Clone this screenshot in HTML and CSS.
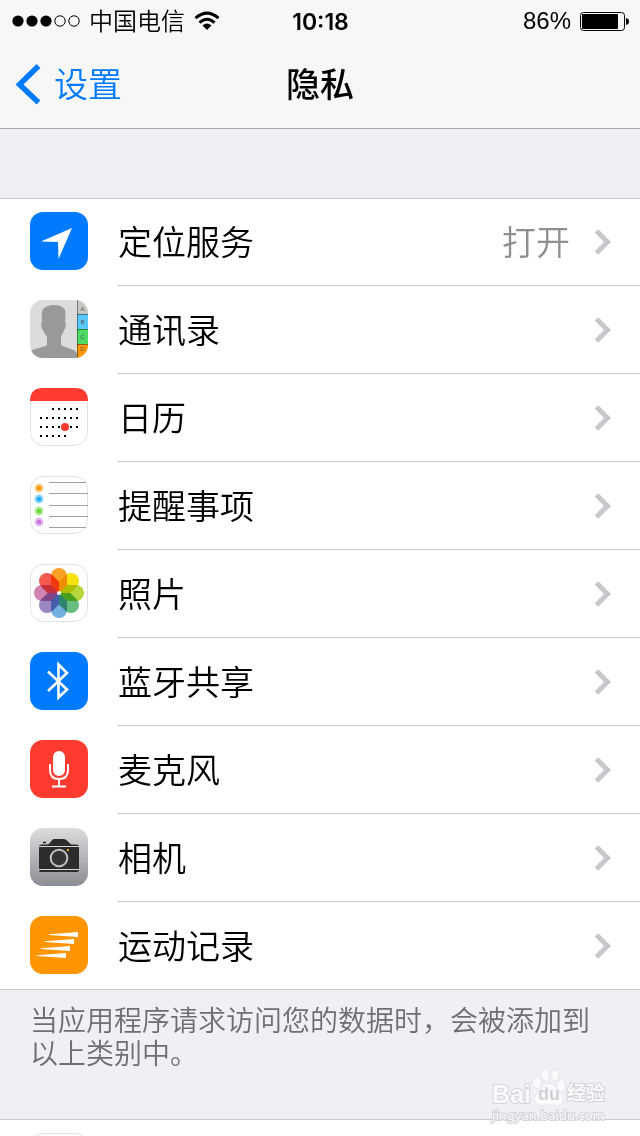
FILE: index.html
```html
<!DOCTYPE html>
<html lang="zh-CN">
<head>
<meta charset="utf-8">
<meta name="viewport" content="width=device-width, initial-scale=1">
<title>隐私</title>
<link rel="stylesheet" href="styles.css">
</head>
<body>
<div class="screen">
  <header class="top">
    <div class="status">
      <div class="status-left">
        <svg class="signal" width="68" height="12" viewBox="0 0 68 12" aria-hidden="true">
          <circle cx="6" cy="6" r="5.6"/><circle cx="20" cy="6" r="5.6"/><circle cx="34" cy="6" r="5.6"/>
          <g fill="none" stroke="#000"><circle cx="48" cy="6" r="5.2"/><circle cx="62" cy="6" r="5.2"/></g>
        </svg>
        <span class="carrier">中国电信</span>
        <svg class="wifi" width="26" height="20" viewBox="0 0 26 20" aria-hidden="true">
          <g fill="none" stroke="#000" stroke-width="3"><path d="M1.500 7.200Q13-3 24.500 7.200"/><path d="M5.500 11.700Q13 4.900 20.500 11.700"/></g>
          <path d="M8.500 14.600Q13 10.600 17.500 14.600L13 19z"/>
        </svg>
      </div>
      <time class="clock">10:18</time>
      <div class="status-right">
        <span>86%</span>
        <svg width="50" height="20" viewBox="0 0 50 20" aria-hidden="true">
          <rect x="1.500" y="1.500" width="44" height="18" rx="3" fill="none" stroke="#000"/>
          <rect x="3" y="3" width="36" height="15" rx="1"/>
          <path d="M47 7q3 .5 3 3.500t-3 3.500z"/>
        </svg>
      </div>
    </div>
    <nav class="nav">
      <a class="back" href="#settings">
        <svg width="26" height="42" viewBox="0 0 26 42" aria-hidden="true"><path d="M23.500 3 4.500 21.500 23.500 39.500" fill="none" stroke="#007aff" stroke-width="5.500"/></svg>
        <span class="nav-text">设置</span>
      </a>
      <h1 class="title nav-text">隐私</h1>
    </nav>
  </header>

  <main class="content">
    <ul class="group">
      <li><a class="row" href="#location">
        <svg class="icon" viewBox="0 0 58 58" aria-hidden="true"><rect width="58" height="58" rx="13" fill="#007aff"/><path d="M42 16 11 29.500l17 .5.500 17z" fill="#fff"/></svg>
        <span class="body"><span class="label">定位服务</span><span class="value">打开</span><svg class="chevron" viewBox="0 0 18 26"><path d="m2.500 2 11 11-11 11"/></svg></span>
      </a></li>
      <li><a class="row" href="#contacts">
        <svg class="icon" viewBox="0 0 58 58" aria-hidden="true">
          <clipPath id="tile"><rect width="58" height="58" rx="13"/></clipPath>
          <g clip-path="url(#tile)">
            <rect width="58" height="58" fill="#dcdcdc"/>
            <path d="M0 58v-5q1-3 5-4 9-2 12-4V36q-3-2-4-6-2-2-2-6l1-2q-1-10 1-13 4-4 11-4 8 0 11 5 1 2 0 12l1 2q0 4-2 6-1 4-3 6v9q3 2 10 4 5 1 6 5v4z" fill="#999"/>
            <path d="M47 0h11v14H47z" fill="#c8c8c3"/><path d="M47 14h11v15H47z" fill="#5ac8fa"/><path d="M47 29h11v15H47z" fill="#4cd964"/><path d="M47 44h11v14H47z" fill="#ff9500"/>
            <path d="M47.500 0v58M47 14.500h11M47 29.500h11M47 44.500h11" fill="none" stroke="#000" stroke-opacity=".4"/>
            <g class="tabs"><text x="52.500" y="11">A</text><text x="52.500" y="24">B</text><text x="52.500" y="39">C</text><text x="52.500" y="51">D</text></g>
          </g>
        </svg>
        <span class="body"><span class="label">通讯录</span><svg class="chevron" viewBox="0 0 18 26"><path d="m2.500 2 11 11-11 11"/></svg></span>
      </a></li>
      <li><a class="row" href="#calendar">
        <svg class="icon" viewBox="0 0 58 58" aria-hidden="true">
          <rect x=".5" y=".5" width="57" height="57" rx="13" fill="#fff" stroke="#e2e2e2"/>
          <path d="M0 13Q0 0 13 0h32q13 0 13 13z" fill="#ff3b30"/>
          <path d="M22 21h27M10 30h39M10 39h39M10 48h27" fill="none" stroke="#000" stroke-width="2" stroke-dasharray="2 4"/>
          <circle cx="35" cy="39" r="4" fill="#ff3b30"/>
        </svg>
        <span class="body"><span class="label">日历</span><svg class="chevron" viewBox="0 0 18 26"><path d="m2.500 2 11 11-11 11"/></svg></span>
      </a></li>
      <li><a class="row" href="#reminders">
        <svg class="icon" viewBox="0 0 58 58" aria-hidden="true">
          <rect x=".5" y=".5" width="57" height="57" rx="13" fill="#fff" stroke="#e2e2e2"/>
          <path d="M19 6.500h37M19 17.500h39M19 29.500h39M19 40.500h39M19 51.500h37" fill="none" stroke="#a0a0a0"/>
          <g stroke-opacity=".6" stroke-width="1.500">
            <circle cx="9" cy="12" r="2.500" fill="#ff9500"/><circle cx="9" cy="12" r="3.500" fill="none" stroke="#ff9500"/>
            <circle cx="9" cy="23" r="2.500" fill="#1badf8"/><circle cx="9" cy="23" r="3.500" fill="none" stroke="#1badf8"/>
            <circle cx="9" cy="35" r="2.500" fill="#63da38"/><circle cx="9" cy="35" r="3.500" fill="none" stroke="#63da38"/>
            <circle cx="9" cy="46" r="2.500" fill="#cc73e1"/><circle cx="9" cy="46" r="3.500" fill="none" stroke="#cc73e1"/>
          </g>
        </svg>
        <span class="body"><span class="label">提醒事项</span><svg class="chevron" viewBox="0 0 18 26"><path d="m2.500 2 11 11-11 11"/></svg></span>
      </a></li>
      <li><a class="row" href="#photos">
        <svg class="icon" viewBox="0 0 58 58" aria-hidden="true">
          <rect x=".5" y=".5" width="57" height="57" rx="13" fill="#fff" stroke="#e2e2e2"/>
          <defs><path id="petal" d="M29 29 21 21V12a8 8 0 0 1 16 0V21z"/></defs>
          <g class="petals">
            <use href="#petal" fill="#fba026"/>
            <use href="#petal" transform="rotate(45 29 29)" fill="#f5e10b"/>
            <use href="#petal" transform="rotate(90 29 29)" fill="#b6d63c"/>
            <use href="#petal" transform="rotate(135 29 29)" fill="#67bd80"/>
            <use href="#petal" transform="rotate(180 29 29)" fill="#72b0e0"/>
            <use href="#petal" transform="rotate(225 29 29)" fill="#9b86c4"/>
            <use href="#petal" transform="rotate(270 29 29)" fill="#d184b2"/>
            <use href="#petal" transform="rotate(315 29 29)" fill="#f45a50"/>
          </g>
          <circle cx="29" cy="29" r="2" fill="#fff"/>
        </svg>
        <span class="body"><span class="label">照片</span><svg class="chevron" viewBox="0 0 18 26"><path d="m2.500 2 11 11-11 11"/></svg></span>
      </a></li>
      <li><a class="row" href="#bluetooth">
        <svg class="icon" viewBox="0 0 58 58" aria-hidden="true"><rect width="58" height="58" rx="13" fill="#007aff"/><path d="M18 19.500 37 37.500l-8.500 8V12.500l8.500 8.500L18 39" fill="none" stroke="#fff" stroke-width="2.600"/></svg>
        <span class="body"><span class="label">蓝牙共享</span><svg class="chevron" viewBox="0 0 18 26"><path d="m2.500 2 11 11-11 11"/></svg></span>
      </a></li>
      <li><a class="row" href="#microphone">
        <svg class="icon" viewBox="0 0 58 58" aria-hidden="true"><rect width="58" height="58" rx="13" fill="#ff3b30"/><rect x="23" y="11" width="12" height="25" rx="6" fill="#fff"/><path d="M20 24v6q0 9 9 9t9-9v-6M29 39v7M22 46.500h14" fill="none" stroke="#fff" stroke-width="2"/></svg>
        <span class="body"><span class="label">麦克风</span><svg class="chevron" viewBox="0 0 18 26"><path d="m2.500 2 11 11-11 11"/></svg></span>
      </a></li>
      <li><a class="row" href="#camera">
        <svg class="icon" viewBox="0 0 58 58" aria-hidden="true">
          <linearGradient id="steel" x2="0" y2="1"><stop stop-color="#dbddde"/><stop offset="1" stop-color="#8b8d94"/></linearGradient>
          <rect width="58" height="58" rx="13" fill="url(#steel)"/>
          <path d="M9 18.500q0-2 3-2h5q2 0 4-3t3-2.500h10q2 0 4 2.500t4 3h4q3 0 3 2V42q0 2-2 2H11q-2 0-2-2z" fill="#2c2c2c"/>
          <path d="M13 14.500h3" stroke="#222" stroke-width="1.500"/>
          <path d="M9 18.500h40M9 41.500h40" stroke="#d5d5d5"/>
          <circle cx="29" cy="30" r="8.300" fill="#343434" stroke="#bfc0c2" stroke-width="2"/>
          <path d="M37 21h2v2h-2z" fill="#e5a619"/>
        </svg>
        <span class="body"><span class="label">相机</span><svg class="chevron" viewBox="0 0 18 26"><path d="m2.500 2 11 11-11 11"/></svg></span>
      </a></li>
      <li><a class="row" href="#motion">
        <svg class="icon" viewBox="0 0 58 58" aria-hidden="true"><rect width="58" height="58" rx="13" fill="#ff9500"/><path d="M19 18.200 48 16v5l-29-2zM15 25.200 44 23v5l-29-2zM11 32.200 40 30v5l-29-2zM7 39.200 36 37v5l-29-2z" fill="#fff"/></svg>
        <span class="body"><span class="label">运动记录</span><svg class="chevron" viewBox="0 0 18 26"><path d="m2.500 2 11 11-11 11"/></svg></span>
      </a></li>
    </ul>
    <p class="note">当应用程序请求访问您的数据时，会被添加到以上类别中。</p>
    <div class="group next"><div class="tile"></div></div>
  </main>

  <div class="watermark">
    <div class="brand">
      <span>Bai</span>
      <span class="paw">
        <svg width="34" height="38" viewBox="0 0 34 38" aria-hidden="true"><g fill="#fafafc" stroke="#d8d8dc"><ellipse cx="5" cy="14.500" rx="4" ry="5.500"/><ellipse cx="13" cy="6.500" rx="4" ry="5.500"/><ellipse cx="23" cy="7" rx="4" ry="5.500"/><ellipse cx="29" cy="17.500" rx="4" ry="5.500"/><path d="M17 15.500q5 0 8 6 6 5 6 10 0 5-6 5.500-8-1-16 0-6-.5-6-5.500 0-5 6-10 3-6 8-6z"/></g></svg>
        <span class="du">du</span>
      </span>
      <span class="cn">经验</span>
    </div>
    <div class="site">jingyan.baidu.com</div>
  </div>
</div>
</body>
</html>
```
FILE: styles.css
```css
* {
  box-sizing: border-box;
}

body {
  margin: 0;
  background: #efeff4;
  color: #000;
  font-family: "Liberation Sans", "Noto Sans CJK SC", sans-serif;
  font-weight: 350;
}

a {
  color: inherit;
  text-decoration: none;
}

svg {
  display: block;
  flex: none;
}

.screen {
  position: relative;
  display: flex;
  flex-direction: column;
  height: 100vh;
  overflow: hidden;
}

.top {
  flex: none;
  background: #f7f7f7;
  border-bottom: 1px solid #a7a7ac;
}

.status,
.nav {
  display: grid;
  grid-template-columns: 1fr auto 1fr;
  align-items: center;
}

.status {
  height: 40px;
  padding: 0 11px 0 12px;
  font-size: 24px;
  line-height: 40px;
}

.status-left,
.status-right {
  display: flex;
  align-items: center;
  gap: 9px;
}

.status-right {
  justify-content: flex-end;
  gap: 8px;
}

.carrier {
  padding-top: 2px;
}

.clock {
  padding-top: 1px;
  font-family: Inter, sans-serif;
  font-size: 23px;
  font-weight: 600;
}

.nav {
  height: 88px;
  font-size: 34px;
}

.back {
  display: flex;
  align-items: center;
  gap: 13px;
  padding-left: 15px;
  color: #007aff;
}

.nav-text {
  padding-bottom: 4px;
}

.title {
  margin: 0;
  font-size: 34px;
  font-weight: 500;
}

.content {
  display: flex;
  flex: 1;
  flex-direction: column;
  padding-top: 69px;
}

.group {
  flex: none;
  margin: 0;
  padding: 0;
  list-style: none;
  background: #fff;
  border: solid #c8c7cc;
  border-width: 1px 0;
}

.row {
  display: flex;
  align-items: flex-start;
  gap: 30px;
  height: 88px;
  padding-left: 30px;
}

.group li:first-child .row,
.group li:last-child .row {
  height: 87px;
}

.icon {
  width: 58px;
  height: 58px;
  margin-top: 14px;
}

.group li:first-child .icon {
  margin-top: 13px;
}

.body {
  display: flex;
  flex: 1;
  align-items: center;
  align-self: stretch;
  padding-right: 28px;
  border-bottom: 1px solid #c8c7cc;
  font-size: 34px;
}

.group li:last-child .body {
  border-bottom: 0;
}

.label,
.value {
  padding-bottom: 3px;
}

.label {
  flex: 1;
}

.value {
  margin-right: 24px;
  color: #8e8e93;
}

.chevron {
  width: 18px;
  height: 26px;
  fill: none;
  stroke: #c7c7cc;
  stroke-width: 5;
}

.tabs {
  fill: #555;
  font-size: 6px;
  text-anchor: middle;
}

.petals > * {
  mix-blend-mode: multiply;
}

.note {
  flex: none;
  margin: 0;
  padding: 15px 30px 48px;
  color: #6d6d72;
  font-size: 28px;
  line-height: 33px;
}

.next {
  flex: 1;
  padding: 13px 30px 0;
  overflow: hidden;
}

.tile {
  width: 58px;
  height: 58px;
  border: 1px solid #e2e2e2;
  border-radius: 13px;
}

.watermark {
  position: absolute;
  right: 35px;
  bottom: 14px;
  color: #fafafc;
  font-weight: 700;
  pointer-events: none;
  -webkit-text-stroke: 2px #d4d4d9;
  paint-order: stroke fill;
}

.brand {
  display: flex;
  align-items: flex-end;
  gap: 1px;
  font-size: 25px;
  line-height: 24px;
}

.paw {
  position: relative;
}

.du {
  position: absolute;
  inset: auto 0 0;
  color: #d0d0d5;
  font-size: 18px;
  line-height: 24px;
  text-align: center;
  -webkit-text-stroke: 0;
}

.cn {
  font-size: 19px;
}

.site {
  margin-top: 2px;
  font-family: "Noto Sans", sans-serif;
  font-size: 13px;
  font-weight: 400;
  line-height: 14px;
}
```
